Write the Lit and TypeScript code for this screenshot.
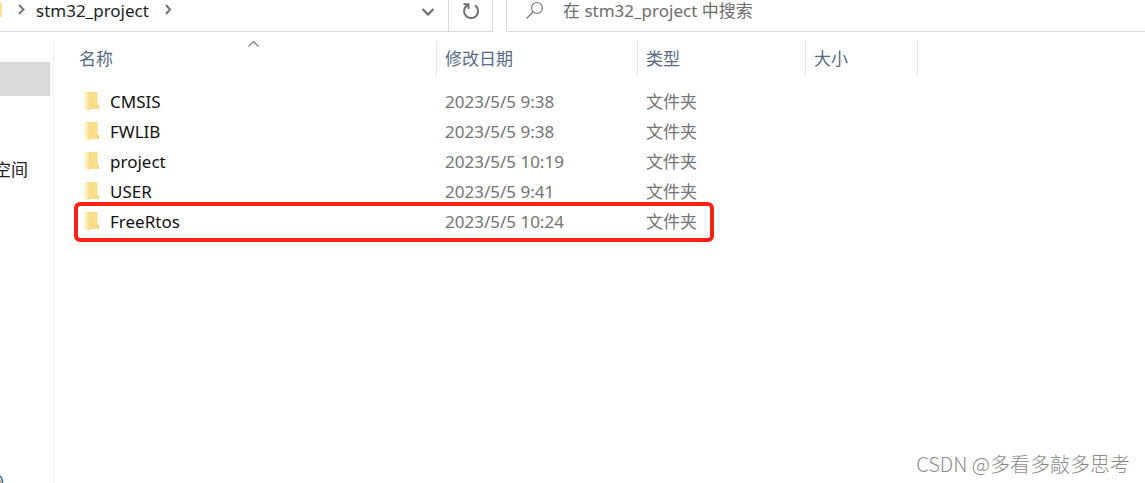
import { LitElement, html, css, svg } from "lit";
import { customElement } from "lit/decorators.js";

interface Entry {
  name: string;
  modified: string;
  kind: string;
  marked?: boolean;
}

const entries: Entry[] = [
  { name: "CMSIS", modified: "2023/5/5 9:38", kind: "文件夹" },
  { name: "FWLIB", modified: "2023/5/5 9:38", kind: "文件夹" },
  { name: "project", modified: "2023/5/5 10:19", kind: "文件夹" },
  { name: "USER", modified: "2023/5/5 9:41", kind: "文件夹" },
  { name: "FreeRtos", modified: "2023/5/5 10:24", kind: "文件夹", marked: true },
];

const chevron = (d: string, width: number) =>
  svg`<path d=${d} fill="none" stroke="currentColor" stroke-width=${width} />`;

@customElement("address-bar")
export class AddressBar extends LitElement {
  static styles = css`
    :host {
      display: flex;
      height: 32px;
      gap: 13px;
    }
    .path,
    .search {
      display: flex;
      box-sizing: border-box;
      border-bottom: 1px solid #d9d9d9;
      padding-bottom: 9px;
      line-height: 22px;
    }
    .path {
      flex: 0 0 493px;
      border-right: 1px solid #d9d9d9;
      padding-bottom: 0;
    }
    .crumbs {
      display: flex;
      flex: 1;
      height: 22px;
      align-items: center;
    }
    svg {
      display: block;
      flex: none;
    }
    .arrow {
      color: #777;
    }
    .root {
      margin-right: 12px;
    }
    a {
      color: #222;
      text-decoration: none;
      padding: 0 14px 0 10px;
    }
    button {
      display: flex;
      border: 0;
      background: none;
      padding: 0;
      color: #707070;
      height: 22px;
      align-items: center;
      justify-content: center;
    }
    .history {
      width: 40px;
    }
    .tool {
      border-left: 1px solid #d9d9d9;
      width: 43px;
    }
    .tool button {
      width: 43px;
    }
    .search {
      flex: 1;
      min-width: 0;
      border-left: 1px solid #d9d9d9;
      padding-left: 18px;
      gap: 18px;
      color: #777;
    }
    input {
      flex: 1;
      min-width: 0;
      border: 0;
      outline: 0;
      padding: 0;
      height: 22px;
      background: none;
      font: inherit;
      color: #222;
    }
    input::placeholder {
      color: #6d6d6d;
      opacity: 1;
    }
  `;

  render() {
    return html`
      <div class="path">
        <nav class="crumbs" aria-label="路径">
          <svg class="root" width="6" height="22" viewBox="0 0 6 22">
            <path d="M0 3H2V17H0Z" fill="#ffe08a" />
          </svg>
          <svg class="arrow" width="8" height="22" viewBox="0 0 8 22">
            ${chevron("M1 5L5.500 9.500L1 14", 2)}
          </svg>
          <a href="#">stm32_project</a>
          <svg class="arrow" width="8" height="22" viewBox="0 0 8 22">
            ${chevron("M3 5L7 9.500L3 14", 2)}
          </svg>
        </nav>
        <button class="history" aria-label="历史记录">
          <svg width="14" height="22" viewBox="0 0 14 22">
            ${chevron("M1.500 9L7 14.500L12.500 9", 2.200)}
          </svg>
        </button>
        <div class="tool">
          <button aria-label="刷新">
            <svg width="18" height="22" viewBox="0 0 18 22">
              <path d="M13 5.300A7 7 0 1 1 5.500 5.100M6.500 9V4.200H1.500" fill="none" stroke="currentColor" stroke-width="2" />
            </svg>
          </button>
        </div>
      </div>
      <div class="search">
        <svg width="20" height="22" viewBox="0 0 20 22">
          <circle cx="12" cy="8" r="5.500" fill="none" stroke="currentColor" stroke-width="1.200" />
          <path d="M8 12L1.500 18.500" stroke="currentColor" stroke-width="1.300" />
        </svg>
        <input type="search" aria-label="搜索" placeholder="在 stm32_project 中搜索" />
      </div>
    `;
  }
}

@customElement("side-pane")
export class SidePane extends LitElement {
  static styles = css`
    :host {
      display: flex;
      flex-direction: column;
      overflow: hidden;
      box-sizing: border-box;
      border-right: 1px solid #f0f0f0;
    }
    .selected {
      height: 34px;
      margin: 22px 3px 0 0;
      background: #d9d9d9;
    }
    .item {
      display: flex;
      justify-content: flex-end;
      margin-top: 62px;
      padding-right: 25px;
      line-height: 24px;
      color: #222;
      text-decoration: none;
      white-space: nowrap;
    }
    svg {
      display: block;
      margin-top: auto;
    }
  `;

  render() {
    return html`
      <div class="selected"></div>
      <a class="item" href="#">空间</a>
      <svg width="4" height="8" viewBox="0 0 4 8">
        <path d="M0 1Q2.500 3 2.500 8" fill="none" stroke="#2676ad" stroke-width="1.500" />
        <path d="M0 4Q1 5 1 8H0Z" fill="#e58a3a" />
      </svg>
    `;
  }
}

@customElement("file-list")
export class FileList extends LitElement {
  static styles = css`
    :host {
      display: block;
      min-width: 0;
    }
    table {
      width: 100%;
      table-layout: fixed;
      border-collapse: separate;
      border-spacing: 0;
    }
    .col-name {
      width: 383px;
    }
    .col-date {
      width: 201px;
    }
    .col-kind {
      width: 168px;
    }
    .col-size {
      width: 112px;
    }
    th {
      position: relative;
      box-sizing: border-box;
      height: 36px;
      padding: 2px 0 0 8px;
      border-right: 1px solid #e5e5e5;
      text-align: left;
      font-weight: 400;
    }
    th:first-child {
      padding-left: 25px;
    }
    th button {
      border: 0;
      padding: 0;
      background: none;
      font: inherit;
      color: #566a85;
    }
    .sort {
      position: absolute;
      top: 0;
      left: 193px;
      color: #888;
    }
    tbody::before {
      content: "";
      display: table-row;
      height: 10px;
    }
    tr {
      position: relative;
    }
    td {
      height: 30px;
      padding: 1px 0 0 8px;
      box-sizing: border-box;
      color: #747474;
      line-height: 24px;
    }
    td:first-child {
      padding-left: 30px;
    }
    .name {
      display: flex;
      align-items: center;
      gap: 10px;
      color: #111;
      text-decoration: none;
    }
    .folder {
      display: block;
      flex: none;
    }
    .mark {
      position: absolute;
      top: -4px;
      left: 20px;
      width: 640px;
      height: 40px;
      box-sizing: border-box;
      border: 4px solid #fb2116;
      border-radius: 6px;
      pointer-events: none;
    }
  `;

  private folder() {
    return html`<svg class="folder" width="16" height="22" viewBox="0 0 16 22">
      <path d="M2.500 1H13.500V14L15 14.500V18H2.500Z" fill="#f9dc88" />
      <path d="M13 14H15V18H13Z" fill="#f2d27a" />
      <path d="M1 1.500L2.500 1L5 4V20L1 17.500Z" fill="#ffedb5" />
      <path d="M5 4V19.500" stroke="#eccf7c" stroke-width=".6" />
    </svg>`;
  }

  render() {
    return html`
      <table>
        <colgroup>
          <col class="col-name" />
          <col class="col-date" />
          <col class="col-kind" />
          <col class="col-size" />
          <col />
        </colgroup>
        <thead>
          <tr>
            <th scope="col" aria-sort="ascending">
              <button>名称</button>
              <svg class="sort" width="13" height="8" viewBox="0 0 13 8">
                ${chevron("M1.500 6.500L6.500 1.500L11.500 6.500", 1.300)}
              </svg>
            </th>
            <th scope="col"><button>修改日期</button></th>
            <th scope="col"><button>类型</button></th>
            <th scope="col"><button>大小</button></th>
          </tr>
        </thead>
        <tbody>
          ${entries.map(
            (e) => html`<tr>
              <td>
                <a class="name" href="#">${this.folder()}${e.name}</a>
                ${e.marked ? html`<span class="mark"></span>` : null}
              </td>
              <td>${e.modified}</td>
              <td>${e.kind}</td>
              <td></td>
              <td></td>
            </tr>`
          )}
        </tbody>
      </table>
    `;
  }
}

@customElement("app-root")
export class AppRoot extends LitElement {
  static styles = css`
    :host {
      display: flex;
      flex-direction: column;
      position: relative;
      box-sizing: border-box;
      min-height: 100vh;
      background: #fff;
      font: 17px/22px "Noto Sans", "Noto Sans CJK SC", sans-serif;
    }
    .body {
      display: grid;
      grid-template-columns: 54px 1fr;
      flex: 1;
      padding-top: 8px;
    }
    .credit {
      position: absolute;
      right: 15px;
      bottom: 6px;
      font: 300 20px/26px "Noto Sans CJK SC", sans-serif;
      color: #8c8c8c;
    }
  `;

  render() {
    return html`
      <address-bar></address-bar>
      <div class="body">
        <side-pane></side-pane>
        <file-list></file-list>
      </div>
      <div class="credit">CSDN @多看多敲多思考</div>
    `;
  }
}
